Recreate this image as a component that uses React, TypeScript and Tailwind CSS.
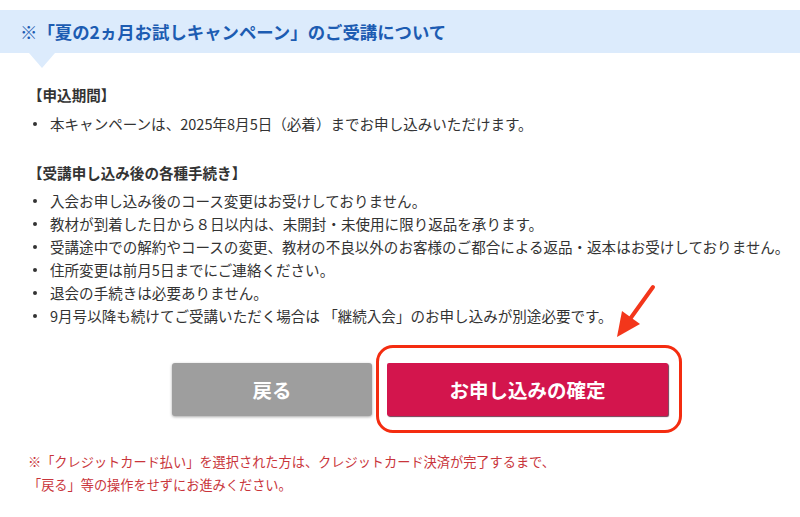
import React from "react";

const font = { fontFamily: '"Noto Sans CJK JP", "Noto Sans", sans-serif' };

function Bullet({ children }: { children: React.ReactNode }) {
  return (
    <li className="flex items-center h-[23px]">
      <span className="w-[4px] h-[4px] rounded-full bg-[#333] ml-[5px] mr-[13px] shrink-0" />
      <span className="whitespace-nowrap">{children}</span>
    </li>
  );
}

export default function App() {
  return (
    <div
      className="relative w-[800px] h-[517px] bg-white overflow-hidden text-[#333] text-[14.55px]"
      style={font}
    >
      <div className="pt-[10px]">
        <div className="relative h-[43px] bg-[#dcebfc] flex items-center pl-[20px]">
          <h2 className="text-[17.4px] font-bold text-[#1c5cb2] whitespace-nowrap leading-none">
            ※「夏の2ヵ月お試しキャンペーン」のご受講について
          </h2>
          <div className="absolute left-[29px] top-full w-0 h-0 border-l-[13px] border-r-[13px] border-t-[15px] border-l-transparent border-r-transparent border-t-[#dcebfc]" />
        </div>
      </div>

      <div className="pl-[28px]">
        <p className="mt-[30px] font-bold leading-[23px]">【申込期間】</p>
        <ul className="mt-[6px]">
          <Bullet>本キャンペーンは、2025年8月5日（必着）までお申し込みいただけます。</Bullet>
        </ul>

        <p className="mt-[26px] font-bold leading-[23px]">【受講申し込み後の各種手続き】</p>
        <ul className="mt-[5px]">
          <Bullet>入会お申し込み後のコース変更はお受けしておりません。</Bullet>
          <Bullet>教材が到着した日から８日以内は、未開封・未使用に限り返品を承ります。</Bullet>
          <Bullet>受講途中での解約やコースの変更、教材の不良以外のお客様のご都合による返品・返本はお受けしておりません。</Bullet>
          <Bullet>住所変更は前月5日までにご連絡ください。</Bullet>
          <Bullet>退会の手続きは必要ありません。</Bullet>
          <Bullet>9月号以降も続けてご受講いただく場合は 「継続入会」のお申し込みが別途必要です。</Bullet>
        </ul>
      </div>

      <div className="mt-[36px] pl-[172px] flex gap-[15px]">
        <button className="w-[200px] h-[53px] bg-[#9e9e9e] rounded-[3px] shadow-[0_1px_3px_rgba(0,0,0,0.35)] text-white font-bold text-[19.5px] flex items-center justify-center">
          戻る
        </button>
        <button className="w-[281px] h-[53px] bg-[#d3154d] rounded-[2px] shadow-[1px_1px_1px_rgba(80,10,40,0.8)] text-white font-bold text-[19.5px] flex items-center justify-center">
          お申し込みの確定
        </button>
      </div>

      <div className="mt-[34px] pl-[28px] text-[13.2px] leading-[23px] text-[#c9353b]">
        <p className="whitespace-nowrap">※「クレジットカード払い」を選択された方は、クレジットカード決済が完了するまで、</p>
        <p className="whitespace-nowrap">「戻る」等の操作をせずにお進みください。</p>
      </div>

      {/* annotation outline */}
      <div className="absolute left-[376px] top-[345px] w-[306px] h-[88px] border-[3px] border-[#f42c10] rounded-[17px]" />

      {/* annotation arrow */}
      <svg className="absolute left-[600px] top-[275px]" width="70" height="70" viewBox="0 0 70 70">
        <line x1="53" y1="12" x2="30" y2="44" stroke="#f3361b" strokeWidth="4" strokeLinecap="round" />
        <polygon points="17,62 40,49 22,36" fill="#f3361b" />
      </svg>
    </div>
  );
}
